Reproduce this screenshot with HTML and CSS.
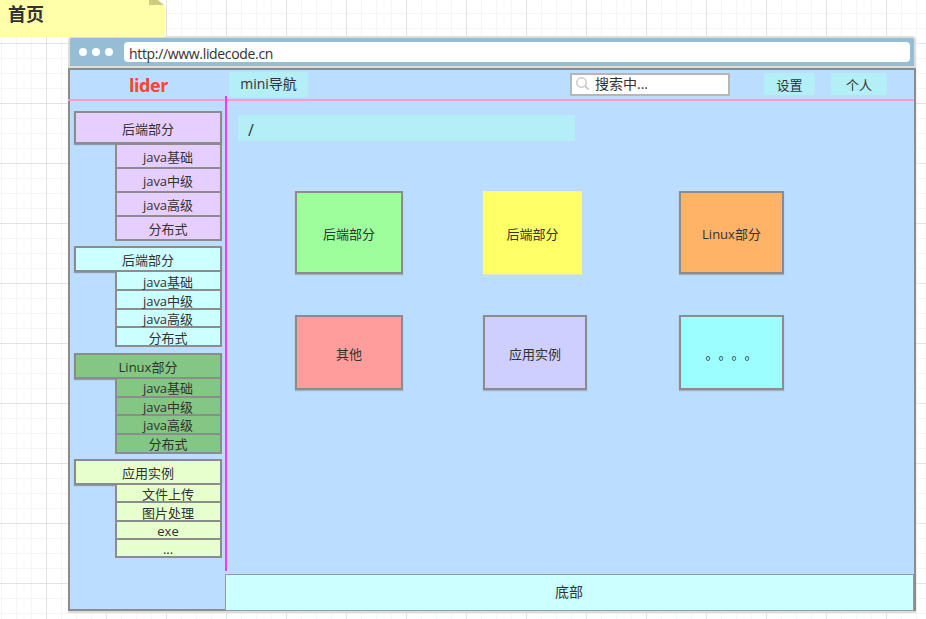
FILE: index.html
```
<!DOCTYPE html>
<html lang="zh-CN">
<head>
<meta charset="utf-8">
<title>首页</title>
<link rel="stylesheet" href="styles.css">
</head>
<body>
<div class="note">
  <h1>首页</h1>
  <svg class="fold" width="16" height="6" viewBox="0 0 16 6"><path fill="#fff" d="M9 0h7v6z"/><path fill="#cdcd7c" d="M0 0h9l6 5H0z"/></svg>
</div>
<div class="browser">
  <div class="chrome">
    <i class="dot"></i><i class="dot"></i><i class="dot"></i>
    <div class="url"><span>http://www.lidecode.cn</span></div>
  </div>
  <div class="screen">
    <header class="top">
      <div class="logo">lider</div>
      <div class="chip mini"><span>mini导航</span></div>
      <div class="search">
        <svg width="15" height="15" viewBox="0 0 15 15" fill="none" stroke="#c9c9c9" stroke-width="1.5"><circle cx="5.5" cy="5.5" r="4.7"/><path d="M9 9l3.6 3.6" stroke-width="1.8"/></svg>
        <span>搜索中...</span>
      </div>
      <div class="chip settings"><span>设置</span></div>
      <div class="chip user"><span>个人</span></div>
    </header>
    <div class="body">
      <nav class="side">
        <section class="group purple">
          <h2><span>后端部分</span></h2>
          <ul><li><span>java基础</span></li><li><span>java中级</span></li><li><span>java高级</span></li><li><span>分布式</span></li></ul>
        </section>
        <section class="group cyan">
          <h2><span>后端部分</span></h2>
          <ul><li><span>java基础</span></li><li><span>java中级</span></li><li><span>java高级</span></li><li><span>分布式</span></li></ul>
        </section>
        <section class="group green">
          <h2><span>Linux部分</span></h2>
          <ul><li><span>java基础</span></li><li><span>java中级</span></li><li><span>java高级</span></li><li><span>分布式</span></li></ul>
        </section>
        <section class="group lime">
          <h2><span>应用实例</span></h2>
          <ul><li><span>文件上传</span></li><li><span>图片处理</span></li><li><span>exe</span></li><li><span>...</span></li></ul>
        </section>
      </nav>
      <main class="main">
        <div class="path">/</div>
        <div class="cards">
          <div class="card c1">后端部分</div>
          <div class="card c2">后端部分</div>
          <div class="card c3">Linux部分</div>
          <div class="card c4">其他</div>
          <div class="card c5">应用实例</div>
          <div class="card c6">。。。。</div>
        </div>
        <footer class="foot"><span>底部</span></footer>
      </main>
    </div>
  </div>
</div>
</body>
</html>
```
FILE: styles.css
```
* { box-sizing: border-box; }
html { height: 100%; }
body {
  margin: 0;
  height: 619px;
  overflow: hidden;
  color: #323232;
  font: 13px/18px "Open Sans", "Noto Sans CJK SC", sans-serif;
  background-color: #fff;
  background-image:
    linear-gradient(90deg, #e3e3e3 1px, transparent 1px),
    linear-gradient(#e3e3e3 1px, transparent 1px),
    linear-gradient(90deg, #f5f5f5 1px, transparent 1px),
    linear-gradient(#f5f5f5 1px, transparent 1px);
  background-size: 60px 60px, 60px 60px, 15px 15px, 15px 15px;
  background-position: 46px 43px, 46px 43px, 1px 13px, 1px 13px;
}
h1, h2, ul { margin: 0; padding: 0; list-style: none; }
span { white-space: nowrap; }

.note {
  position: relative;
  width: 165px;
  height: 37px;
  padding: 2px 0 0 8px;
  background: #ffffaa;
}
.note h1 { font-size: 18px; line-height: 24px; font-weight: 700; }
.fold { position: absolute; left: 149px; top: 0; }

.browser { width: 848px; margin: -1px 0 0 68px; }
.chrome {
  display: flex;
  align-items: center;
  height: 32px;
  padding: 0 4px 0 9px;
  border: 2px solid #ddd;
  border-radius: 4px 4px 0 0;
  background: #94bdd6;
}
.dot { width: 8px; height: 8px; margin-right: 5px; border-radius: 50%; background: #fff; }
.url {
  flex: 1;
  height: 20px;
  margin-left: 6px;
  padding: 3px 5px 0;
  border-radius: 4px;
  background: #fff;
  font-size: 14px;
  letter-spacing: -0.33px;
}
.screen {
  height: 543px;
  border: 2px solid #8c8c8c;
  background: #bbddff;
  box-shadow: 0 2px 1px #dcdcdc;
}
.top {
  display: flex;
  align-items: flex-start;
  height: 31px;
  margin-left: -2px;
  padding-top: 2px;
  border-bottom: 2px solid #ff99cc;
}
.logo {
  width: 161px;
  color: #ff4433;
  font-size: 18px;
  line-height: 26px;
  font-weight: 700;
  letter-spacing: -0.4px;
  text-align: center;
}
.chip { display: flex; justify-content: center; background: #b4eff7; border-radius: 2px; }
.mini { width: 79px; height: 25px; padding-top: 3px; font-size: 14px; }
.search {
  display: flex;
  width: 160px;
  height: 23px;
  margin: 1px 34px 0 262px;
  padding: 0 0 0 4px;
  border: 2px solid #b4b6b8;
  background: #fff;
  font-size: 14px;
}
.search svg { margin: 2px 4px 0 0; }
.settings { width: 51px; height: 22px; margin-top: 1px; padding-top: 3px; }
.user { width: 56px; height: 22px; margin: 1px 0 0 16px; padding-top: 3px; }

.body { display: flex; height: 508px; }
.side { width: 155px; padding: 10px 0 0 4px; }
.group { width: 148px; margin-bottom: 6px; }
.group h2, .group li {
  display: flex;
  justify-content: center;
  align-items: center;
  border: 2px solid #8c8c8c;
  background: var(--fill);
  font-size: 13px;
  font-weight: 400;
}
.group h2 { height: 26px; box-shadow: 0 1px 1px #8c9cae; }
.group h2 span { position: relative; top: 0.5px; }
.group ul {
  display: grid;
  grid-template-rows: 19px 18px 19px 19px;
  width: 107px;
  margin: -2px 0 0 41px;
  padding-bottom: 2px;
}
.group li { margin-bottom: -2px; line-height: 16px; }
.group li span { position: relative; top: 1px; left: -0.5px; }
.purple { --fill: #e6ceff; margin-bottom: 5px; }
.purple h2 { height: 33px; }
.purple h2 span { top: 1px; }
.purple ul { grid-template-rows: repeat(4, 24px); margin-top: -1px; }
.cyan { --fill: #ccffff; }
.cyan ul { grid-template-rows: 19px 19px 18px 19px; }
.green { --fill: #84c684; margin-bottom: 5px; }
.green li span { top: 0.5px; }
.lime { --fill: #e6ffcc; }
.lime ul { grid-template-rows: 18px 19px 18px 18px; }

.main { position: relative; flex: 1; padding: 14px 0 0 13px; }
.main::before {
  content: "";
  position: absolute;
  left: 0;
  top: -5px;
  width: 2px;
  height: 475px;
  background: #ff33ff;
}
.path { width: 337px; height: 26px; padding: 6px 10px 0; background: #b4eff7; border-radius: 2px; font-size: 16px; }
.cards {
  display: grid;
  grid-template-columns: 188px 196px 105px;
  grid-template-rows: 124px 75px;
  margin: 50px 0 0 57px;
}
.card {
  display: flex;
  justify-content: center;
  align-items: center;
  height: 83px;
  padding-top: 2px;
  border: 2px solid #8c8c8c;
  box-shadow: 0 1px 1px #9fb4ca;
}
.c1 { width: 108px; background: #9cff9c; }
.c2 { width: 99px; border-color: #ff6; background: #ff6; box-shadow: 0 1px 1px #dbe6bf; }
.c3 { width: 105px; background: #ffb366; }
.c4 { width: 108px; background: #ff9c9c; }
.c5 { width: 104px; background: #ceceff; }
.c6 { width: 105px; background: #9cffff; text-spacing-trim: space-all; }
.c4, .c5, .c6 { height: 75px; }
.foot {
  display: flex;
  justify-content: center;
  height: 37px;
  margin: 184px 0 0 -13px;
  padding: 8px 1px 0 0;
  border: 1px solid #8f9d9f;
  background: #ccffff;
  font-size: 14px;
}
```
